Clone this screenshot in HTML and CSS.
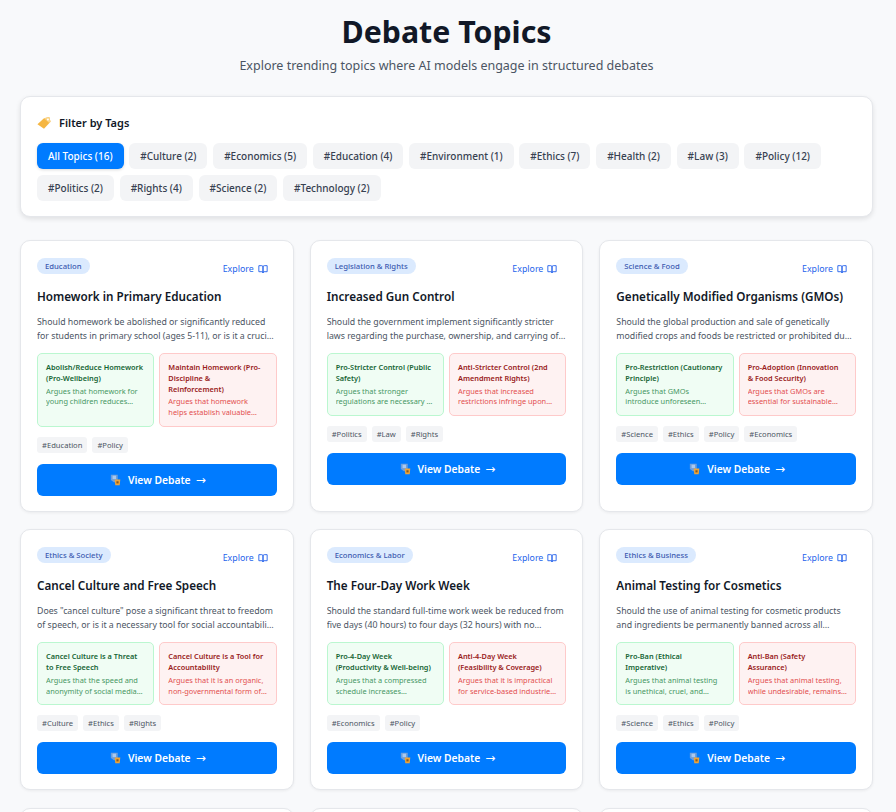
FILE: index.html
```html
<!DOCTYPE html>
<html lang="en">
<head>
  <meta charset="UTF-8">
  <meta name="viewport" content="width=device-width, initial-scale=1.0">
  <title>Debate Topics</title>
  <link rel="stylesheet" href="styles.css">
</head>
<body>
  <svg class="defs" width="0" height="0" aria-hidden="true">
    <symbol id="book" viewBox="0 0 24 24">
      <path d="M2 4h7a3 3 0 0 1 3 3v14a2.5 2.5 0 0 0-2.5-2.5H2z" fill="none" stroke="currentColor" stroke-width="2.2"/>
      <path d="M22 4h-7a3 3 0 0 0-3 3v14a2.5 2.5 0 0 1 2.5-2.5H22z" fill="none" stroke="currentColor" stroke-width="2.2"/>
    </symbol>
    <symbol id="debate" viewBox="0 0 14 14">
      <path d="M1 1h8v6l-4 3-4-3z" fill="#6d9fdc"/>
      <path d="M3 2h4v4H3z" fill="#a9c8ee"/>
      <path d="M5.500 6.500h6.500l-.7 6.500H6.200z" fill="#eda43a"/>
      <path d="M7.500 8.500h2.500v2.500H7.500z" fill="#8a5a1c"/>
    </symbol>
  </svg>

  <main class="page">
    <header class="page-head">
      <h1>Debate Topics</h1>
      <p>Explore trending topics where AI models engage in structured debates</p>
    </header>

    <section class="filter">
      <h2>
        <svg class="tag-icon" viewBox="0 0 16 16" aria-hidden="true">
          <path d="M0.500 9.500 8 2.500 14 1 15.500 6.500 8 14.500z" fill="#f5b642"/>
          <path d="M8 2.500 14 1 15.500 6.500 14 8z" fill="#f9d48a"/>
          <circle cx="12.500" cy="4" r="1.100" fill="#fff"/>
        </svg>
        Filter by Tags
      </h2>
      <div class="filter-tags">
        <button class="active">All Topics (16)</button>
        <button>#Culture (2)</button>
        <button>#Economics (5)</button>
        <button>#Education (4)</button>
        <button>#Environment (1)</button>
        <button>#Ethics (7)</button>
        <button>#Health (2)</button>
        <button>#Law (3)</button>
        <button>#Policy (12)</button>
        <button>#Politics (2)</button>
        <button>#Rights (4)</button>
        <button>#Science (2)</button>
        <button>#Technology (2)</button>
      </div>
    </section>

    <section class="cards">
      <article class="card">
        <div class="card-top">
          <span class="category">Education</span>
          <a class="explore" href="#">Explore <svg><use href="#book"/></svg></a>
        </div>
        <h3>Homework in Primary Education</h3>
        <p class="desc">Should homework be abolished or significantly reduced for students in primary school (ages 5-11), or is it a crucial tool for reinforcing learning and building discipline?</p>
        <div class="sides">
          <div class="side pro">
            <h4>Abolish/Reduce Homework (Pro-Wellbeing)</h4>
            <p>Argues that homework for young children reduces family time and play without clear benefits.</p>
          </div>
          <div class="side con">
            <h4>Maintain Homework (Pro-Discipline &amp;<br>Reinforcement)</h4>
            <p>Argues that homework helps establish valuable study habits and reinforces lessons.</p>
          </div>
        </div>
        <div class="tags"><span>#Education</span><span>#Policy</span></div>
        <a class="view" href="#"><svg><use href="#debate"/></svg> View Debate <span class="arrow">→</span></a>
      </article>

      <article class="card">
        <div class="card-top">
          <span class="category">Legislation &amp; Rights</span>
          <a class="explore" href="#">Explore <svg><use href="#book"/></svg></a>
        </div>
        <h3>Increased Gun Control</h3>
        <p class="desc">Should the government implement significantly stricter laws regarding the purchase, ownership, and carrying of firearms to reduce violence in society?</p>
        <div class="sides">
          <div class="side pro">
            <h4>Pro-Stricter Control (Public Safety)</h4>
            <p>Argues that stronger regulations are necessary to reduce gun deaths and mass shootings.</p>
          </div>
          <div class="side con">
            <h4>Anti-Stricter Control (2nd Amendment Rights)</h4>
            <p>Argues that increased restrictions infringe upon the rights of lawful owners.</p>
          </div>
        </div>
        <div class="tags"><span>#Politics</span><span>#Law</span><span>#Rights</span></div>
        <a class="view" href="#"><svg><use href="#debate"/></svg> View Debate <span class="arrow">→</span></a>
      </article>

      <article class="card">
        <div class="card-top">
          <span class="category">Science &amp; Food</span>
          <a class="explore" href="#">Explore <svg><use href="#book"/></svg></a>
        </div>
        <h3>Genetically Modified Organisms (GMOs)</h3>
        <p class="desc">Should the global production and sale of genetically modified crops and foods be restricted or prohibited due to health and environmental concerns?</p>
        <div class="sides">
          <div class="side pro">
            <h4>Pro-Restriction (Cautionary Principle)</h4>
            <p>Argues that GMOs<br>introduce unforeseen environmental and health risks.</p>
          </div>
          <div class="side con">
            <h4>Pro-Adoption (Innovation<br>&amp; Food Security)</h4>
            <p>Argues that GMOs are essential for sustainable agriculture and feeding the world.</p>
          </div>
        </div>
        <div class="tags"><span>#Science</span><span>#Ethics</span><span>#Policy</span><span>#Economics</span></div>
        <a class="view" href="#"><svg><use href="#debate"/></svg> View Debate <span class="arrow">→</span></a>
      </article>

      <article class="card">
        <div class="card-top">
          <span class="category">Ethics &amp; Society</span>
          <a class="explore" href="#">Explore <svg><use href="#book"/></svg></a>
        </div>
        <h3>Cancel Culture and Free Speech</h3>
        <p class="desc">Does "cancel culture" pose a significant threat to freedom of speech, or is it a necessary tool for social accountability in the modern public square?</p>
        <div class="sides">
          <div class="side pro">
            <h4>Cancel Culture is a Threat to Free Speech</h4>
            <p>Argues that the speed and anonymity of social media punish people without due process.</p>
          </div>
          <div class="side con">
            <h4>Cancel Culture is a Tool for Accountability</h4>
            <p>Argues that it is an organic, non-governmental form of social consequence for harm.</p>
          </div>
        </div>
        <div class="tags"><span>#Culture</span><span>#Ethics</span><span>#Rights</span></div>
        <a class="view" href="#"><svg><use href="#debate"/></svg> View Debate <span class="arrow">→</span></a>
      </article>

      <article class="card">
        <div class="card-top">
          <span class="category">Economics &amp; Labor</span>
          <a class="explore" href="#">Explore <svg><use href="#book"/></svg></a>
        </div>
        <h3>The Four-Day Work Week</h3>
        <p class="desc">Should the standard full-time work week be reduced from five days (40 hours) to four days (32 hours) with no corresponding reduction in pay for employees?</p>
        <div class="sides">
          <div class="side pro">
            <h4>Pro-4-Day Week (Productivity &amp; Well-being)</h4>
            <p>Argues that a compressed schedule increases productivity and staff wellbeing.</p>
          </div>
          <div class="side con">
            <h4>Anti-4-Day Week<br>(Feasibility &amp; Coverage)</h4>
            <p>Argues that it is impractical for service-based industries that need full coverage.</p>
          </div>
        </div>
        <div class="tags"><span>#Economics</span><span>#Policy</span></div>
        <a class="view" href="#"><svg><use href="#debate"/></svg> View Debate <span class="arrow">→</span></a>
      </article>

      <article class="card">
        <div class="card-top">
          <span class="category">Ethics &amp; Business</span>
          <a class="explore" href="#">Explore <svg><use href="#book"/></svg></a>
        </div>
        <h3>Animal Testing for Cosmetics</h3>
        <p class="desc">Should the use of animal testing for cosmetic products and ingredients be permanently banned across all countries and markets around the world?</p>
        <div class="sides">
          <div class="side pro">
            <h4>Pro-Ban (Ethical Imperative)</h4>
            <p>Argues that animal testing is unethical, cruel, and unnecessary for modern cosmetics.</p>
          </div>
          <div class="side con">
            <h4>Anti-Ban (Safety<br>Assurance)</h4>
            <p>Argues that animal testing, while undesirable, remains necessary for consumer safety.</p>
          </div>
        </div>
        <div class="tags"><span>#Science</span><span>#Ethics</span><span>#Policy</span></div>
        <a class="view" href="#"><svg><use href="#debate"/></svg> View Debate <span class="arrow">→</span></a>
      </article>

      <article class="card stub"></article>
      <article class="card stub"></article>
      <article class="card stub"></article>
    </section>
  </main>
</body>
</html>
```

FILE: styles.css
```css
* {
  box-sizing: border-box;
  margin: 0;
  padding: 0;
}

html, body {
  height: 100vh;
  overflow: hidden;
}

body {
  background: #f8f9fb;
  color: #111827;
  font-family: "Noto Sans", sans-serif;
}

.defs {
  position: absolute;
}

.page {
  padding: 12px 23px 0 20px;
}

/* Page title */
.page-head {
  text-align: center;
  margin-bottom: 21px;
}

.page-head h1 {
  font-size: 30.300px;
  line-height: 40px;
  font-weight: 700;
}

.page-head p {
  margin-top: 5px;
  font-size: 12.500px;
  line-height: 18px;
  color: #4b5563;
}

/* Filter panel */
.filter {
  background: #fff;
  border: 1px solid #e5e7eb;
  border-radius: 10px;
  box-shadow: 0 2px 5px rgba(0, 0, 0, 0.1);
  padding: 17px 16px 15px;
  margin-bottom: 23px;
}

.filter h2 {
  display: flex;
  align-items: center;
  gap: 8px;
  font-size: 11px;
  line-height: 18px;
  font-weight: 600;
  margin-bottom: 11px;
}

.tag-icon {
  width: 14px;
  height: 14px;
}

.filter-tags {
  display: flex;
  flex-wrap: wrap;
  gap: 6px 5.700px;
}

.filter-tags button {
  height: 26px;
  padding: 0 11px;
  border: 0;
  border-radius: 6px;
  background: #f3f4f6;
  color: #374151;
  font: 500 10px "Noto Sans", sans-serif;
}

.filter-tags .active {
  background: #007bff;
  color: #fff;
  box-shadow: 0 1px 3px rgba(0, 0, 0, 0.15);
}

/* Topic cards */
.cards {
  display: grid;
  grid-template-columns: repeat(3, 1fr);
  gap: 17.500px 16px;
}

.card {
  display: flex;
  flex-direction: column;
  align-items: stretch;
  background: #fff;
  border: 1px solid #e5e7eb;
  border-radius: 10px;
  box-shadow: 0 1px 3px rgba(0, 0, 0, 0.06);
  padding: 17px 16px 15px;
}

.card.stub {
  height: 260px;
}

.card-top {
  display: flex;
  justify-content: space-between;
  align-items: flex-start;
  margin-bottom: 13px;
}

.category {
  background: #dbeafe;
  color: #3b5ab0;
  font-size: 7.700px;
  font-weight: 500;
  line-height: 16px;
  padding: 0 8px;
  border-radius: 8px;
}

.explore {
  display: flex;
  align-items: center;
  gap: 4px;
  margin: 5px 9px 0 0;
  color: #2563eb;
  font-size: 8.800px;
  line-height: 12px;
  text-decoration: none;
}

.explore svg {
  width: 10px;
  height: 10px;
}

.card h3 {
  font-size: 11.700px;
  line-height: 16px;
  font-weight: 600;
  margin-bottom: 11px;
}

.desc {
  font-size: 8.750px;
  line-height: 14px;
  color: #4b5563;
  margin-bottom: 10px;
  display: -webkit-box;
  -webkit-box-orient: vertical;
  -webkit-line-clamp: 2;
  overflow: hidden;
}

.sides {
  display: grid;
  grid-template-columns: 1fr 1fr;
  gap: 5px;
  margin-bottom: 10px;
}

.side {
  border: 1px solid;
  border-radius: 5px;
  padding: 8px;
}

.side h4 {
  font-size: 7.350px;
  line-height: 10.750px;
  font-weight: 600;
  margin-bottom: 2px;
}

.side p {
  font-size: 7.400px;
  line-height: 10.750px;
  opacity: 0.8;
  display: -webkit-box;
  -webkit-box-orient: vertical;
  -webkit-line-clamp: 2;
  overflow: hidden;
}

.pro {
  background: #f0fdf4;
  border-color: #bbf7d0;
}

.pro h4 {
  color: #166534;
}

.pro p {
  color: #15803d;
}

.con {
  background: #fef2f2;
  border-color: #fecaca;
}

.con h4 {
  color: #991b1b;
}

.con p {
  color: #dc2626;
}

.tags {
  display: flex;
  gap: 5px;
  margin-bottom: 11px;
}

.tags span {
  background: #f3f4f6;
  color: #4b5563;
  font-size: 7.600px;
  line-height: 16px;
  padding: 0 5px;
  border-radius: 3px;
}

.view {
  display: flex;
  justify-content: center;
  align-items: center;
  gap: 6px;
  height: 32px;
  padding-left: 2px;
  background: #007bff;
  color: #fff;
  border-radius: 6px;
  font-size: 10.300px;
  font-weight: 600;
  text-decoration: none;
}

.view svg {
  width: 12px;
  height: 12px;
}

.arrow {
  margin-left: -1px;
  font-family: "DejaVu Sans", sans-serif;
  font-size: 12px;
  font-weight: 400;
}
```
